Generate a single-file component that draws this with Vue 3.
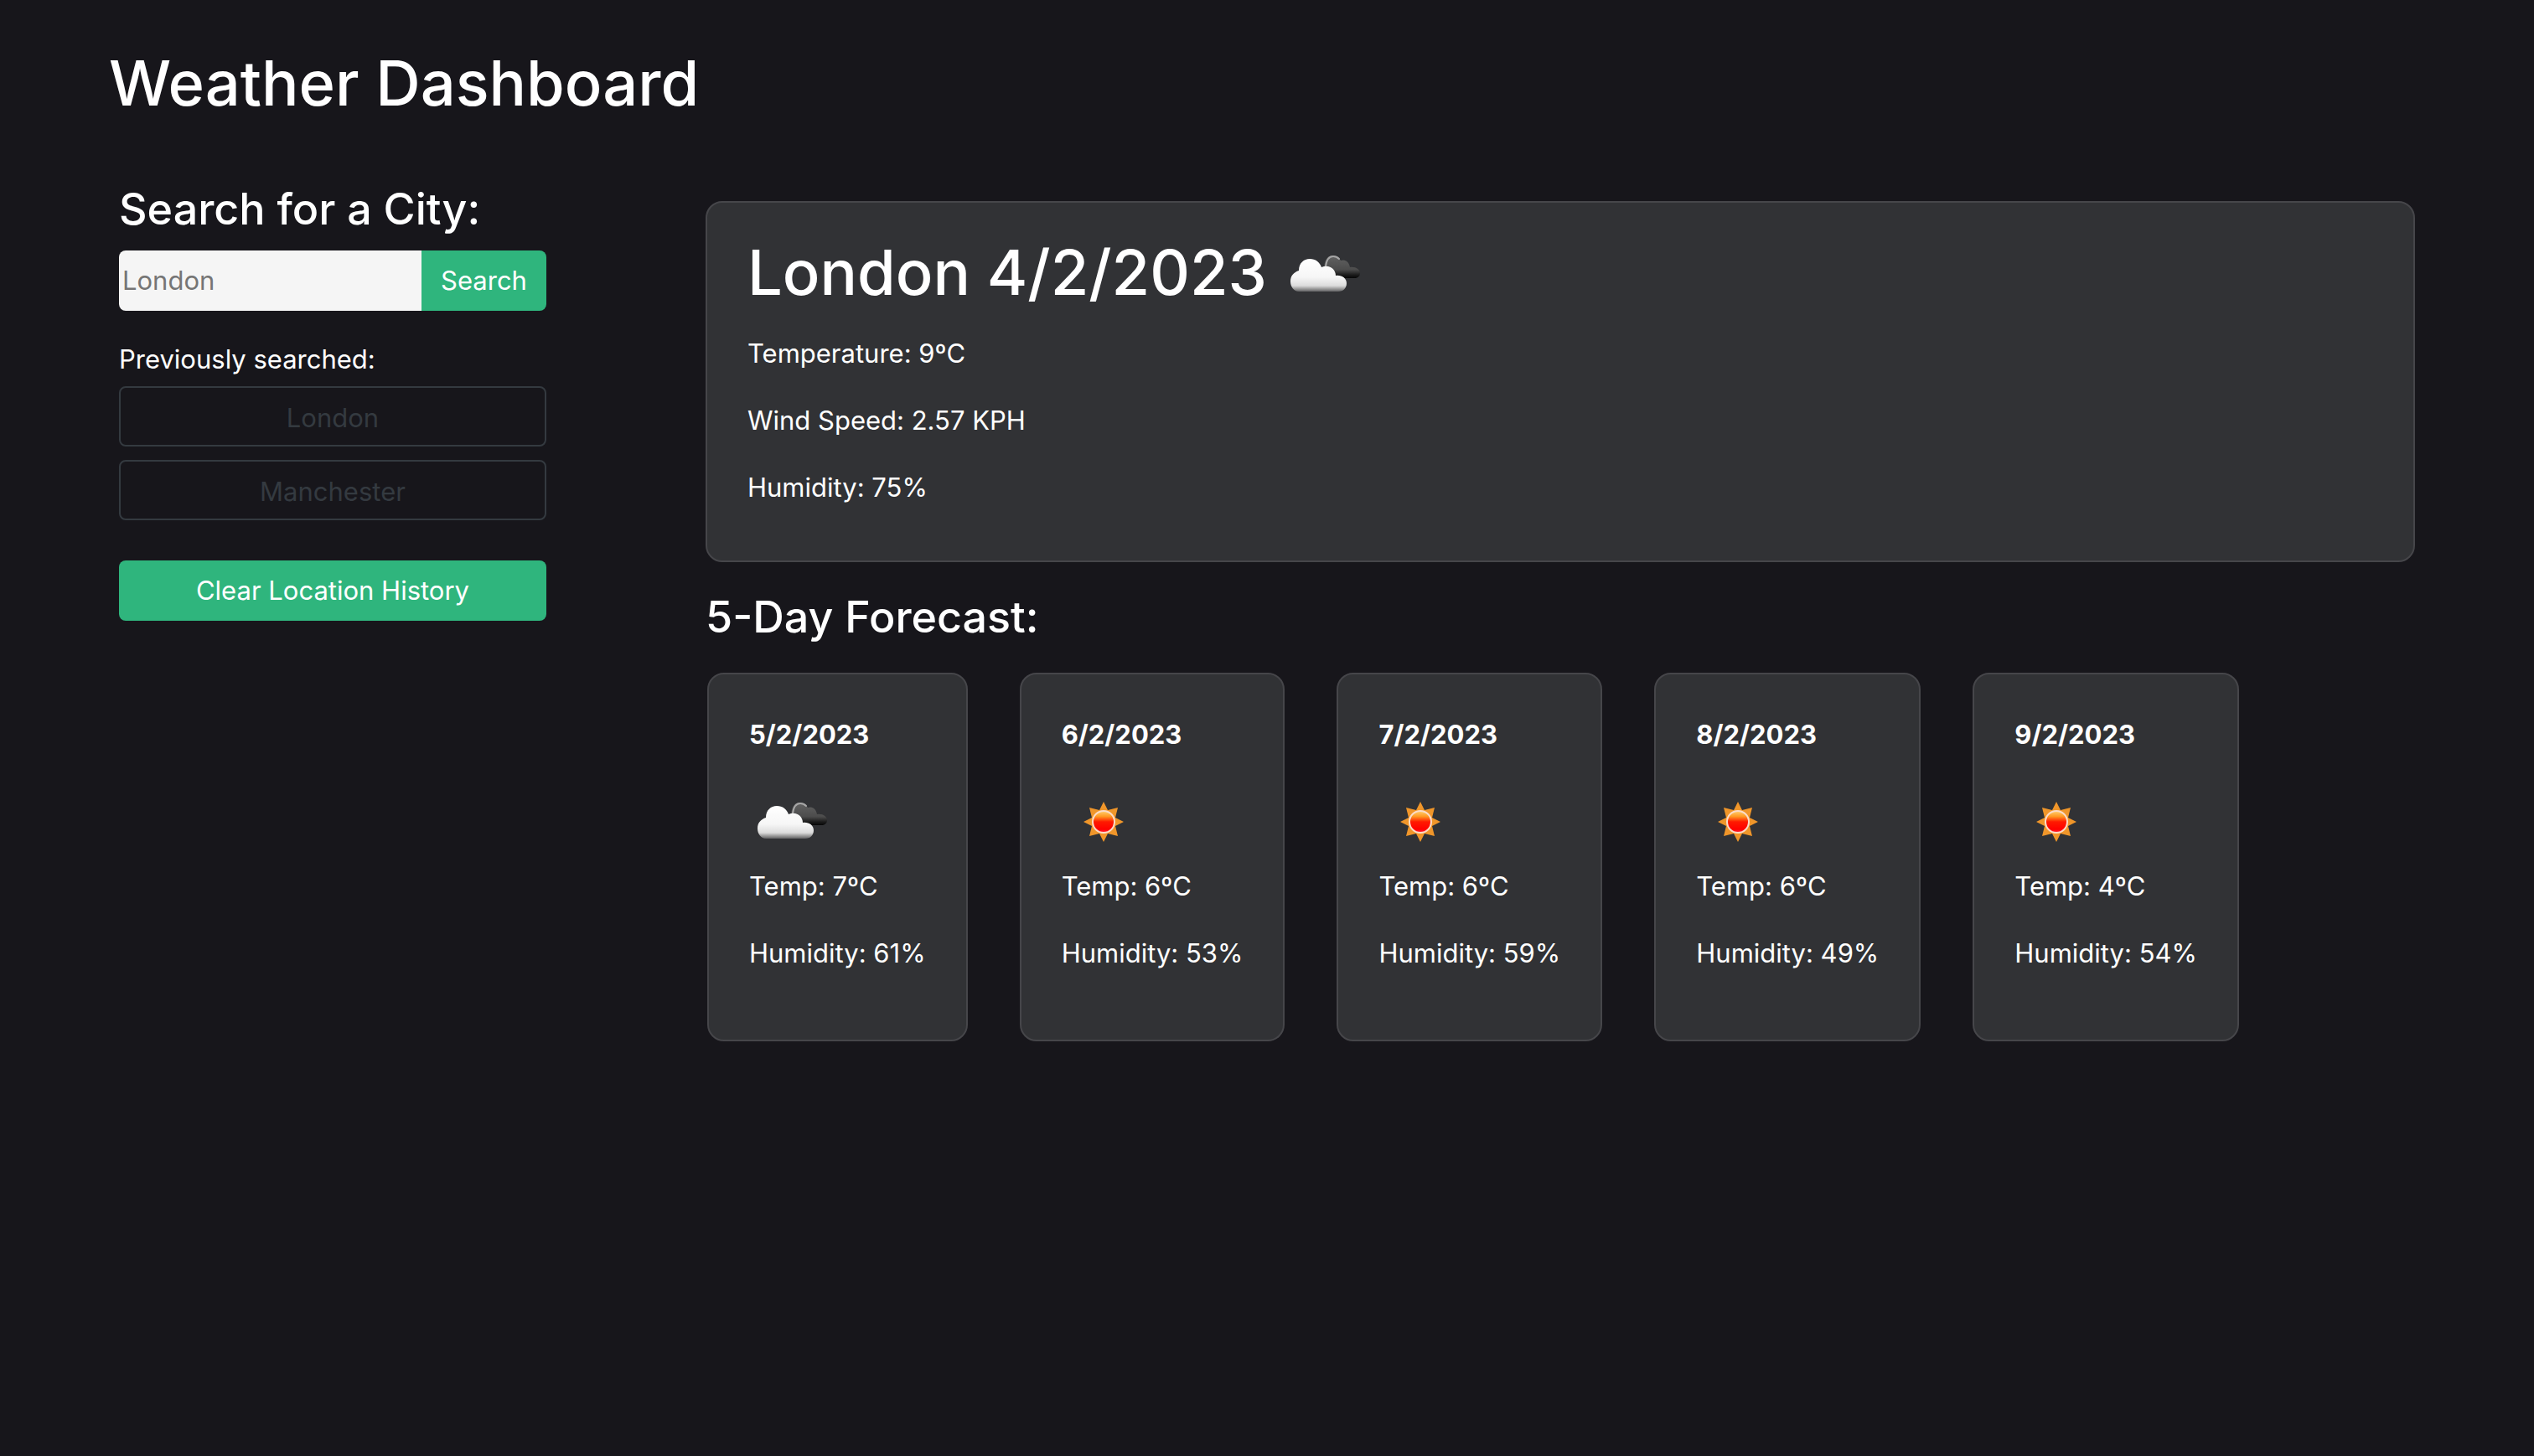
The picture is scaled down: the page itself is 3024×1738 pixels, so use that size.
<script setup>
import { ref } from 'vue'

const query = ref('')
const history = ref(['London', 'Manchester'])

const current = {
  city: 'London',
  date: '4/2/2023',
  temp: 9,
  wind: 2.57,
  humidity: 75,
}

const forecast = [
  { date: '5/2/2023', icon: 'cloud', temp: 7, humidity: 61 },
  { date: '6/2/2023', icon: 'sun', temp: 6, humidity: 53 },
  { date: '7/2/2023', icon: 'sun', temp: 6, humidity: 59 },
  { date: '8/2/2023', icon: 'sun', temp: 6, humidity: 49 },
  { date: '9/2/2023', icon: 'sun', temp: 4, humidity: 54 },
]

function search() {
  const city = query.value.trim()
  if (city && !history.value.includes(city)) history.value.push(city)
}
</script>

<template>
  <div class="page">
    <!-- Shared weather symbols -->
    <svg class="defs" width="0" height="0" aria-hidden="true">
      <defs>
        <linearGradient id="whiteFill" gradientUnits="userSpaceOnUse" x1="0" y1="31" x2="0" y2="71">
          <stop offset="0" stop-color="#ffffff" />
          <stop offset="0.55" stop-color="#f6f6f6" />
          <stop offset="0.8" stop-color="#dcdcdc" />
          <stop offset="0.91" stop-color="#8f8f8f" />
          <stop offset="1" stop-color="#505153" />
        </linearGradient>
        <linearGradient id="darkFill" gradientUnits="userSpaceOnUse" x1="0" y1="27" x2="0" y2="55">
          <stop offset="0" stop-color="#626262" />
          <stop offset="0.6" stop-color="#4c4c4c" />
          <stop offset="0.82" stop-color="#1c1c1c" />
          <stop offset="1" stop-color="#000000" />
        </linearGradient>
        <linearGradient id="sunFill" x1="0" y1="0" x2="0" y2="1">
          <stop offset="0" stop-color="#ffd070" />
          <stop offset="0.25" stop-color="#ff9a24" />
          <stop offset="0.5" stop-color="#ff1a00" />
          <stop offset="0.85" stop-color="#ff0000" />
          <stop offset="1" stop-color="#ff3048" />
        </linearGradient>
        <filter id="soften" x="-5%" y="-5%" width="110%" height="110%" color-interpolation-filters="sRGB">
          <feGaussianBlur stdDeviation="0.6" />
        </filter>
        <symbol id="cloud" viewBox="0 0 100 100">
          <g filter="url(#soften)">
            <path
              d="M50 45C50 34 53 27 61 27C65 27 68 29 70 33C76 31 80 35 81 41C88 40 93 44 93 48C93 52 90 54 86 54H62Z"
              fill="url(#darkFill)"
            />
            <path
              d="M52 40C53 32 56 28 61 28C64 28 66 29 68 31"
              fill="none"
              stroke="#a6a6a6"
              stroke-width="2"
              stroke-linecap="round"
            />
            <path
              d="M20 70C14 70 10 64 10 58C10 51 14 47 20 45C20 36 26 31 33 31C40 31 45 35 47 41C56 37 64 43 64 51C71 50 77 54 77 60C77 66 73 70 67 70Z"
              fill="url(#whiteFill)"
            />
          </g>
        </symbol>
        <symbol id="sun" viewBox="0 0 100 100">
          <g filter="url(#soften)">
            <path
              d="M50 26L55 36L67 33L64 45L74 50L64 55L67 67L55 64L50 74L45 64L33 67L36 55L26 50L36 45L33 33L45 36Z"
              fill="#f0962a"
            />
            <circle cx="50" cy="50" r="13" fill="url(#sunFill)" stroke="#fbdcc8" stroke-width="2" />
          </g>
        </symbol>
      </defs>
    </svg>

    <header class="header">
      <h1>Weather Dashboard</h1>
    </header>

    <div class="layout">
      <aside class="sidebar">
        <form @submit.prevent="search">
          <h2><label for="city">Search for a City:</label></h2>
          <div class="search">
            <input id="city" v-model="query" type="text" placeholder="London" />
            <button class="btn btn-search" type="submit">Search</button>
          </div>
        </form>
        <p class="history-title">Previously searched:</p>
        <div class="history">
          <button v-for="city in history" :key="city" class="btn btn-outline" type="button" @click="query = city">
            {{ city }}
          </button>
        </div>
        <button class="btn btn-clear" type="button" @click="history = []">Clear Location History</button>
      </aside>

      <main class="main">
        <section class="card current">
          <div class="current-head">
            <h1>{{ current.city }} {{ current.date }}</h1>
            <svg class="icon" role="img" aria-label="Broken clouds"><use href="#cloud" /></svg>
          </div>
          <p>Temperature: {{ current.temp }}ºC</p>
          <p>Wind Speed: {{ current.wind }} KPH</p>
          <p>Humidity: {{ current.humidity }}%</p>
        </section>

        <h2 class="forecast-title">5-Day Forecast:</h2>
        <section class="forecast">
          <article v-for="day in forecast" :key="day.date" class="card day">
            <p class="date">{{ day.date }}</p>
            <svg class="icon" role="img" :aria-label="day.icon"><use :href="'#' + day.icon" /></svg>
            <p>Temp: {{ day.temp }}ºC</p>
            <p>Humidity: {{ day.humidity }}%</p>
          </article>
        </section>
      </main>
    </div>
  </div>
</template>

<style>
body {
  background: #17161b;
}
</style>

<style scoped>
.page {
  color: #fff;
  font-family: Inter, "Liberation Sans", sans-serif;
  font-size: 31px;
  line-height: 48px;
}

.page * {
  box-sizing: border-box;
}

.defs {
  position: absolute;
}

h1,
h2,
p {
  margin: 0;
}

h1 {
  font-size: 74px;
  font-weight: 500;
  line-height: 94px;
}

h2 {
  font-size: 52px;
  font-weight: 500;
  line-height: 68px;
}

.header {
  padding: 52px 130px 0;
}

.layout {
  display: flex;
  align-items: flex-start;
  gap: 190px;
  padding: 70px 142px 0;
}

.sidebar {
  flex: none;
  width: 510px;
}

.search {
  display: flex;
  height: 72px;
  margin-top: 15px;
  border-radius: 8px;
  overflow: hidden;
}

.search input {
  flex: 1;
  min-width: 0;
  padding: 0 4px;
  border: 0;
  outline: 0;
  background: #f5f5f5;
  color: #212529;
  font: inherit;
}

.search input::placeholder {
  color: #757575;
  opacity: 1;
}

.btn {
  height: 72px;
  padding: 0;
  border: 0;
  border-radius: 8px;
  color: #fff;
  font: inherit;
  cursor: pointer;
}

.btn-search {
  width: 149px;
  border-radius: 0;
  background: #2fb57d;
}

.btn-clear {
  width: 100%;
  margin-top: 48px;
  background: #2fb57d;
}

.btn-outline {
  padding-top: 3px;
  border: 2px solid #343a40;
  background: transparent;
  color: #343a40;
}

.history-title {
  margin-top: 34px;
}

.history {
  display: flex;
  flex-direction: column;
  gap: 16px;
  margin-top: 8px;
}

.main {
  flex: 1;
  min-width: 0;
  padding-top: 24px;
}

.card {
  border: 2px solid #46464a;
  border-radius: 20px;
  background: #313235;
}

.card p + p {
  margin-top: 32px;
}

.icon {
  display: block;
  width: 100px;
  height: 100px;
}

.current {
  padding: 36px 48px 63px;
}

.current-head {
  display: flex;
  align-items: flex-start;
  gap: 18px;
  margin-bottom: 20px;
}

.forecast-title {
  margin-top: 32px;
}

.forecast {
  display: flex;
  gap: 62px;
  margin: 32px 2px 0;
}

.day {
  padding: 48px 48px 79px;
}

.date {
  font-weight: 700;
}

.day .icon {
  margin: 30px 0 3px;
}
</style>
